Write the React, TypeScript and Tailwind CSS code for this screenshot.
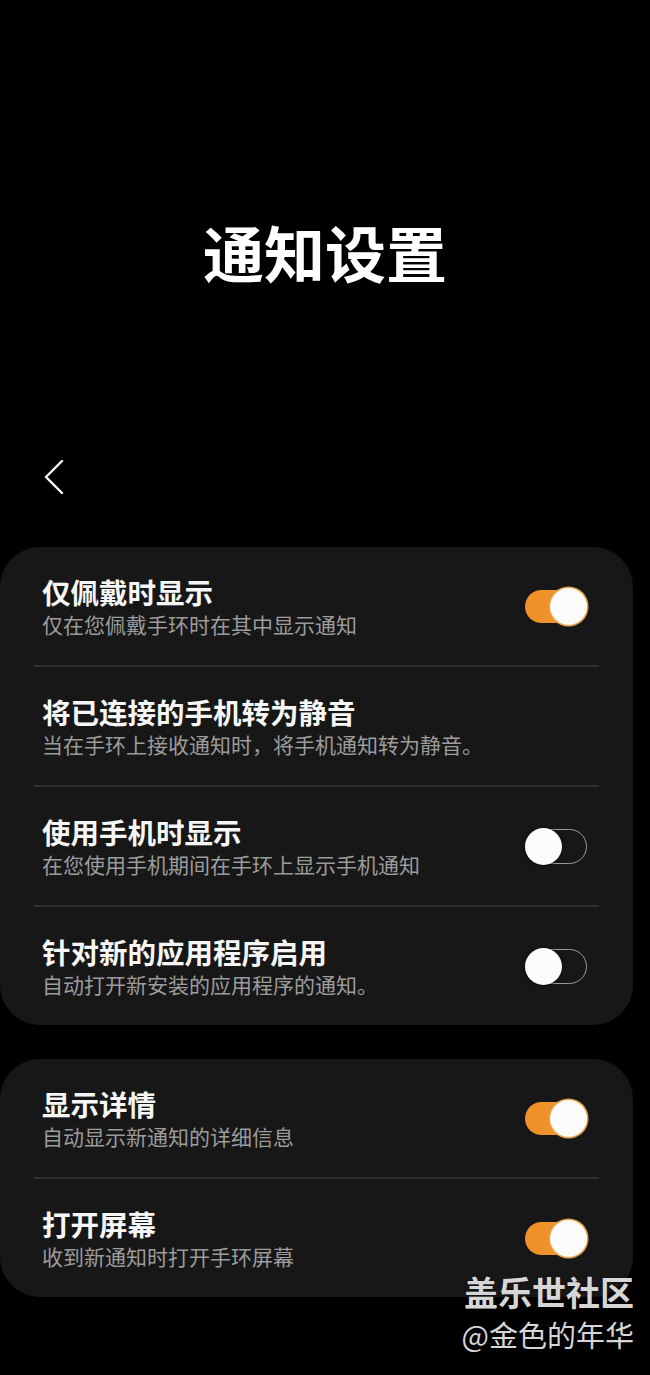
const font = { fontFamily: '"Noto Sans CJK SC", "Noto Sans", sans-serif' };

type Item = { title: string; desc: string; on?: boolean | null };

const group1: Item[] = [
  { title: "仅佩戴时显示", desc: "仅在您佩戴手环时在其中显示通知", on: true },
  { title: "将已连接的手机转为静音", desc: "当在手环上接收通知时，将手机通知转为静音。", on: null },
  { title: "使用手机时显示", desc: "在您使用手机期间在手环上显示手机通知", on: false },
  { title: "针对新的应用程序启用", desc: "自动打开新安装的应用程序的通知。", on: false },
];

const group2: Item[] = [
  { title: "显示详情", desc: "自动显示新通知的详细信息", on: true },
  { title: "打开屏幕", desc: "收到新通知时打开手环屏幕", on: true },
];

function Toggle({ on }: { on: boolean }) {
  if (on) {
    return (
      <div className="relative w-[62px] h-[37px] shrink-0">
        <div className="absolute left-0 top-[2px] w-[48px] h-[33px] rounded-full bg-[#f0922a]" />
        <div className="absolute right-0 top-0 w-[37px] h-[37px] rounded-full bg-[#fbfbfb] shadow-[0_0_0_1.5px_#e9a04a]" />
      </div>
    );
  }
  return (
    <div className="relative w-[62px] h-[37px] shrink-0">
      <div className="absolute left-0 top-[1px] w-[62px] h-[35px] rounded-full border-[1.5px] border-[#9a9a9a]" />
      <div className="absolute left-0 top-0 w-[37px] h-[37px] rounded-full bg-[#fbfbfb] shadow-[0_0_2px_1px_rgba(0,0,0,0.5)]" />
    </div>
  );
}

function Card({ items }: { items: Item[] }) {
  return (
    <div className="w-[633px] rounded-[40px] bg-[#171717]">
      {items.map((it, i) => (
        <div key={it.title}>
          {i > 0 && <div className="mx-[34px] h-[2px] bg-[#2f2f2f]" />}
          <div className="h-[118px] flex items-center pl-[42px] pr-[46px]">
            <div className="flex-1 flex flex-col">
              <div className="text-[28.5px] leading-[36px] font-bold text-[#f6f6f6]">{it.title}</div>
              <div className="text-[21px] leading-[28px] text-[#9c9c9c]">{it.desc}</div>
            </div>
            {it.on !== null && it.on !== undefined && <Toggle on={it.on} />}
          </div>
        </div>
      ))}
    </div>
  );
}

export default function App() {
  return (
    <div className="relative w-[650px] h-[1375px] bg-black overflow-hidden" style={font}>
      <div className="pt-[222px] h-[60px] box-content text-center text-[61px] leading-[60px] font-bold text-white">
        通知设置
      </div>
      <div className="mt-[178px] pl-[43px]">
        <svg width="22" height="34" viewBox="0 0 22 34" fill="none">
          <polyline points="19,1 3,17 19,33" stroke="#fff" strokeWidth="2.4" strokeLinecap="round" strokeLinejoin="round" />
        </svg>
      </div>
      <div className="mt-[53px] flex flex-col gap-[34px]">
        <Card items={group1} />
        <Card items={group2} />
      </div>
      <div className="absolute right-[16px] top-[1270px] flex flex-col items-end text-[#d6d6d6]">
        <div className="text-[34px] leading-[44px] font-bold [text-shadow:0_0_2px_rgba(0,0,0,0.6)]">盖乐世社区</div>
        <div className="text-[29px] leading-[40px]">@金色的年华</div>
      </div>
    </div>
  );
}
